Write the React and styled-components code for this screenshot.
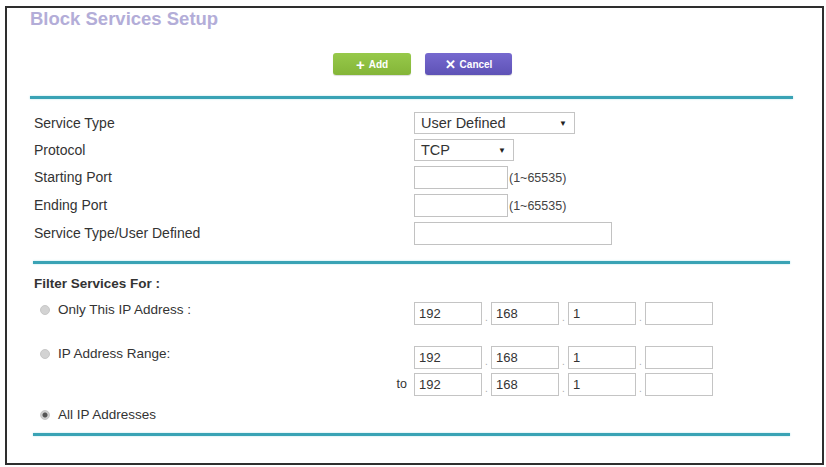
import React from "react";
import styled, { createGlobalStyle } from "styled-components";

const GlobalStyle = createGlobalStyle`
  body {
    margin: 0;
    background: #ffffff;
    font-family: "Liberation Sans", Arial, sans-serif;
    color: #3a3a3a;
  }
`;

const Frame = styled.div`
  margin: 6px 2px 0 5px;
  height: 455px;
  border: 2px solid #2e2e2e;
  padding: 0 29px 0 23px;
  background: #fff;
`;

const Title = styled.h1`
  margin: 1px 0 0;
  font-size: 18.5px;
  line-height: 20px;
  font-weight: bold;
  color: #b3add8;
`;

const ButtonBar = styled.div`
  display: flex;
  justify-content: center;
  gap: 14px;
  margin-top: 24px;
  padding-left: 22px;
`;

const Button = styled.button`
  display: flex;
  align-items: center;
  justify-content: center;
  gap: 4px;
  width: ${(p) => p.$width}px;
  height: 22px;
  border: none;
  border-radius: 3px;
  color: #fff;
  font-family: "Liberation Sans", Arial, sans-serif;
  font-size: 10px;
  font-weight: bold;
  padding: 0;
  background: ${(p) =>
    p.$variant === "green"
      ? "linear-gradient(#97c94a, #84b538)"
      : "linear-gradient(#7669cf, #5e52b6)"};
  box-shadow: 0 1px 1px rgba(0, 0, 0, 0.15);
`;

const Glyph = styled.span`
  font-size: ${(p) => p.$size}px;
  line-height: 1;
  font-weight: bold;
`;

const Divider = styled.div`
  height: 3px;
  margin: ${(p) => p.$margin};
  background: #3aa3b5;
  box-shadow: 0 0 2px #a9dfe8;
`;

const FormGrid = styled.div`
  display: grid;
  grid-template-columns: 380px 1fr;
  row-gap: 5px;
  margin-top: 13px;
  padding-left: 4px;
`;

const Label = styled.div`
  font-size: 14px;
  line-height: ${(p) => p.$h || 22}px;
  color: #333;
`;

const Field = styled.div`
  display: flex;
  align-items: center;
  height: ${(p) => p.$h || 22}px;
`;

const SelectBox = styled.div`
  display: flex;
  align-items: center;
  justify-content: space-between;
  box-sizing: border-box;
  width: ${(p) => p.$width}px;
  height: 22px;
  padding: 0 7px 0 6px;
  border: 1px solid #c4c4c4;
  font-size: 14.5px;
  color: #333;
`;

const Arrow = styled.span`
  font-size: 8px;
  color: #222;
`;

const TextInput = styled.input`
  box-sizing: border-box;
  width: ${(p) => p.$width}px;
  height: 23px;
  border: 1px solid #c2c2c2;
  padding: 0 4px;
  font-family: "Liberation Sans", Arial, sans-serif;
  font-size: 13px;
  color: #333;
  outline: none;
`;

const Hint = styled.span`
  font-size: 12.5px;
  color: #444;
  margin-left: 1px;
`;

const SectionTitle = styled.div`
  margin-top: 12px;
  padding-left: 4px;
  font-size: 13.5px;
  line-height: 16px;
  font-weight: bold;
  color: #333;
`;

const IpRow = styled.div`
  display: grid;
  grid-template-columns: 380px 1fr;
  align-items: start;
  margin-top: ${(p) => p.$top}px;
  padding-left: 4px;
`;

const RadioLabel = styled.label`
  display: flex;
  align-items: center;
  gap: 8px;
  padding-left: 6px;
  font-size: 13.5px;
  line-height: 16px;
  color: #333;
`;

const Radio = styled.span`
  width: 10px;
  height: 10px;
  border-radius: 50%;
  background: ${(p) =>
    p.$checked
      ? "radial-gradient(circle, #555 0 2px, #cfcfcf 3px)"
      : "#d3d3d3"};
  border: 1px solid #c8c8c8;
  box-sizing: border-box;
`;

const ToLabel = styled.div`
  text-align: right;
  padding-right: 7px;
  font-size: 12.5px;
  line-height: 23px;
  color: #333;
`;

const IpFields = styled.div`
  display: flex;
  align-items: flex-end;
`;

const IpBox = styled.input`
  box-sizing: border-box;
  width: 68px;
  height: 23px;
  border: 1px solid #c4c4c4;
  padding: 0 4px;
  font-family: "Liberation Sans", Arial, sans-serif;
  font-size: 13px;
  color: #333;
  outline: none;
`;

const Dot = styled.span`
  width: 9px;
  text-align: center;
  font-size: 10px;
  line-height: 14px;
  color: #aaa;
`;

const IpInput = ({ values }) => (
  <IpFields>
    {values.map((v, i) => (
      <React.Fragment key={i}>
        {i > 0 && <Dot>.</Dot>}
        <IpBox readOnly defaultValue={v} />
      </React.Fragment>
    ))}
  </IpFields>
);

const ip = ["192", "168", "1", ""];

const App = () => {
  return (
    <>
      <GlobalStyle />
      <Frame>
        <Title>Block Services Setup</Title>

        <ButtonBar>
          <Button $variant="green" $width={78}>
            <Glyph $size={15}>+</Glyph> Add
          </Button>
          <Button $variant="purple" $width={87}>
            <Glyph $size={13}>✕</Glyph>Cancel
          </Button>
        </ButtonBar>

        <Divider $margin="21px 0 0" />

        <FormGrid>
          <Label>Service Type</Label>
          <Field>
            <SelectBox $width={161}>
              User Defined <Arrow>▼</Arrow>
            </SelectBox>
          </Field>

          <Label>Protocol</Label>
          <Field>
            <SelectBox $width={100}>
              TCP <Arrow>▼</Arrow>
            </SelectBox>
          </Field>

          <Label $h={23}>Starting Port</Label>
          <Field $h={23}>
            <TextInput $width={94} readOnly />
            <Hint>(1~65535)</Hint>
          </Field>

          <Label $h={23}>Ending Port</Label>
          <Field $h={23}>
            <TextInput $width={94} readOnly />
            <Hint>(1~65535)</Hint>
          </Field>

          <Label $h={23}>Service Type/User Defined</Label>
          <Field $h={23}>
            <TextInput $width={198} readOnly />
          </Field>
        </FormGrid>

        <Divider $margin="16px 3px 0 3px" />

        <SectionTitle>Filter Services For :</SectionTitle>

        <IpRow $top={10}>
          <RadioLabel>
            <Radio /> Only This IP Address :
          </RadioLabel>
          <IpInput values={ip} />
        </IpRow>

        <IpRow $top={21}>
          <RadioLabel>
            <Radio /> IP Address Range:
          </RadioLabel>
          <IpInput values={ip} />
        </IpRow>

        <IpRow $top={4}>
          <ToLabel>to</ToLabel>
          <IpInput values={ip} />
        </IpRow>

        <IpRow $top={11}>
          <RadioLabel>
            <Radio $checked /> All IP Addresses
          </RadioLabel>
        </IpRow>

        <Divider $margin="10px 3px 0 3px" />
      </Frame>
    </>
  );
};

export default App;
